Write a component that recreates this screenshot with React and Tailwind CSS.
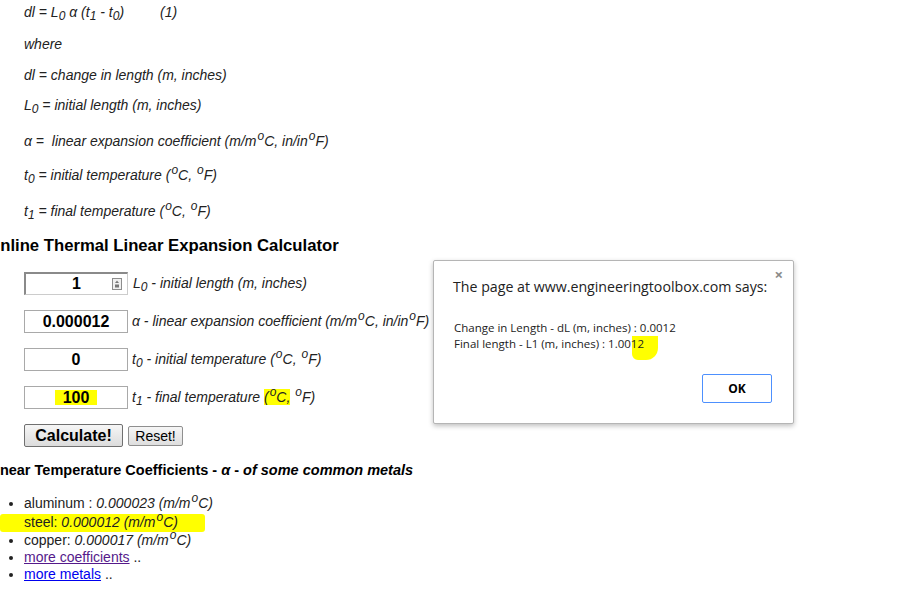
import React from "react";

const Sub = ({ children }) => <sub className="text-[12px]">{children}</sub>;
const Deg = () => <sup className="text-[12px] ml-[1px]">o</sup>;

function Field({ value, first, hl, children }) {
  return (
    <div className="flex items-center h-[23px]">
      <div
        className={
          "relative w-[104px] h-[23px] flex items-center justify-center bg-white text-[16px] font-bold text-black " +
          (first
            ? "border-t-2 border-l-2 border-r border-b border-t-[#8a8a8a] border-l-[#8a8a8a] border-r-[#ccc] border-b-[#ccc]"
            : "border border-[#a9a9a9]")
        }
      >
        <span className={hl ? "bg-[#ffff00] px-[8px] leading-[15px]" : ""}>{value}</span>
        {first && (
          <svg className="absolute right-[5px] top-[4px]" width="10" height="12" viewBox="0 0 10 12">
            <rect x="0.5" y="0.5" width="9" height="11" fill="#f0f0f0" stroke="#8d8d8d" />
            <path d="M5 2.5 L7 5 H3 Z" fill="#777" />
            <rect x="3" y="6.5" width="4" height="3" fill="#777" />
          </svg>
        )}
      </div>
      <div className={"italic text-[14px] text-[#222] " + (first ? "ml-[5px]" : "ml-[4px]")}>{children}</div>
    </div>
  );
}

export default function App() {
  return (
    <div className="relative w-[920px] h-[595px] overflow-hidden bg-white text-[#222] font-['Liberation_Sans',Arial,sans-serif]">
      {/* Formula block */}
      <div className="pl-6 italic text-[14px] leading-4">
        <p className="pt-1">
          dl = L<Sub>0</Sub> α (t<Sub>1</Sub> - t<Sub>0</Sub>)
          <span className="ml-[36px]">(1)</span>
        </p>
        <p className="mt-4">where</p>
        <p className="mt-[15px]">dl = change in length (m, inches)</p>
        <p className="mt-[14px]">
          L<Sub>0</Sub> = initial length (m, inches)
        </p>
        <p className="mt-[20px]">
          α = &nbsp;linear expansion coefficient (m/m<Deg />C, in/in<Deg />F)
        </p>
        <p className="mt-[18px]">
          t<Sub>0</Sub> = initial temperature (<Deg />C, <Deg />F)
        </p>
        <p className="mt-[20px]">
          t<Sub>1</Sub> = final temperature (<Deg />C, <Deg />F)
        </p>
      </div>

      {/* Calculator */}
      <h2 className="mt-[17px] ml-[-12.8px] text-[16.7px] leading-5 font-bold text-black whitespace-nowrap">
        Online Thermal Linear Expansion Calculator
      </h2>

      <div className="pl-6 mt-4 flex flex-col gap-[15px]">
        <Field value="1" first>
          L<Sub>0</Sub> - initial length (m, inches)
        </Field>
        <Field value="0.000012">
          α - linear expansion coefficient (m/m<Deg />C, in/in<Deg />F)
        </Field>
        <Field value="0">
          t<Sub>0</Sub> - initial temperature (<Deg />C, <Deg />F)
        </Field>
        <Field value="100" hl>
          t<Sub>1</Sub> - final temperature{" "}
          <span className="bg-[#ffff00]">
            (<Deg />C,
          </span>{" "}
          <Deg />F)
        </Field>
      </div>

      <div className="pl-6 mt-[15px] flex items-center gap-[5px]">
        <button className="w-[99px] h-[23px] border border-[#707070] rounded-[2px] bg-gradient-to-b from-[#f6f6f6] to-[#dcdcdc] text-[16px] font-bold text-black leading-none">
          Calculate!
        </button>
        <button className="w-[55px] h-[20px] border border-[#8f8f8f] rounded-[2px] bg-gradient-to-b from-[#f6f6f6] to-[#dedede] text-[14px] text-black leading-none">
          Reset!
        </button>
      </div>

      {/* Coefficients */}
      <h3 className="mt-[15px] ml-[-13px] text-[14.5px] leading-4 font-bold text-black whitespace-nowrap">
        Linear Temperature Coefficients - <i>α</i> - <i>of some common metals</i>
      </h3>

      <ul className="mt-4 pl-6 list-disc text-[14px] text-[#222]">
        <li className="leading-[19px]">
          aluminum : <i>0.000023 (m/m<Deg />C)</i>
        </li>
        <li className="relative leading-[19px]">
          <span className="absolute left-[-24px] top-[1px] w-[205px] h-[18px] bg-[#ffff00] rounded-[3px]" />
          <span className="relative">
            steel: <i>0.000012 (m/m<Deg />C)</i>
          </span>
        </li>
        <li className="leading-[17px]">
          copper: <i>0.000017 (m/m<Deg />C)</i>
        </li>
        <li className="leading-[17px]">
          <a className="text-[#551a8b] underline">more coefficients</a> ..
        </li>
        <li className="leading-[17px]">
          <a className="text-[#0000ee] underline">more metals</a> ..
        </li>
      </ul>

      {/* Alert dialog */}
      <div className="absolute left-[433px] top-[260px] w-[361px] h-[164px] bg-white border border-[#b5b5b5] rounded-[2px] shadow-[0_2px_5px_rgba(0,0,0,0.25)] font-['Open_Sans','Noto_Sans',sans-serif] text-[#222]">
        <span className="absolute left-[198px] top-[75px] w-[26px] h-[24px] bg-[#ffff00] rounded-br-[12px] rounded-bl-[6px]" />
        <span className="absolute right-[10px] top-[6px] text-[15px] font-bold text-[#8a8a8a] leading-none">×</span>
        <div className="relative pl-[19px] pt-[16px]">
          <p className="text-[14.2px] leading-5">The page at www.engineeringtoolbox.com says:</p>
          <div className="mt-[23px] text-[11.5px] leading-4 pl-[1px]">
            <p>Change in Length - dL (m, inches) : 0.0012</p>
            <p>Final length - L1 (m, inches) : 1.0012</p>
          </div>
          <div className="mt-[22px] flex justify-end pr-[21px]">
            <button className="w-[70px] h-[29px] border border-[#4d90fe] rounded-[2px] bg-white text-[12px] font-bold text-black">
              OK
            </button>
          </div>
        </div>
      </div>
    </div>
  );
}
